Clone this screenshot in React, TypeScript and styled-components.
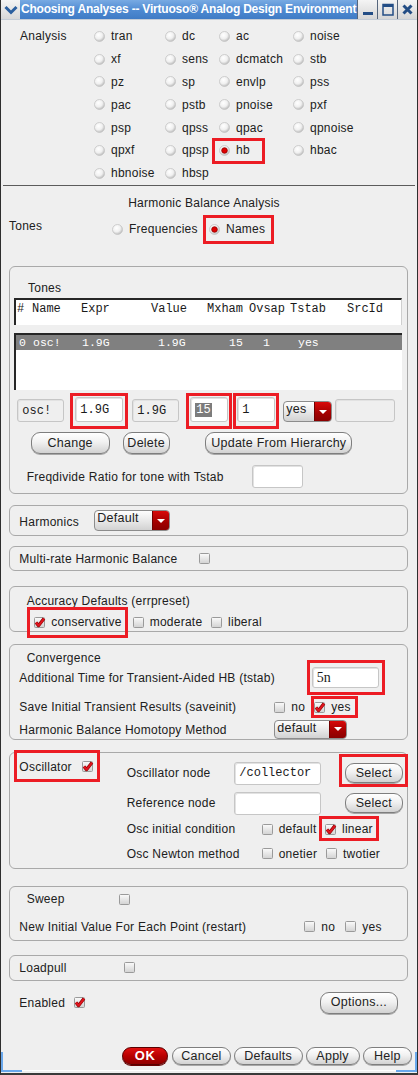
import React from "react";
import styled, { createGlobalStyle } from "styled-components";

const GlobalStyle = createGlobalStyle`
  html, body { margin: 0; padding: 0; background: #efefef; }
  body {
    font-family: "Liberation Sans", Arial, Helvetica, sans-serif;
    font-size: 12px;
    letter-spacing: 0.25px;
    color: #202020;
  }
  #root { width: 418px; height: 1075px; }
`;

const Window = styled.div`
  position: relative;
  width: 418px;
  height: 1075px;
  box-sizing: border-box;
  display: flex;
  flex-direction: column;
  background: #efefef;
  border-left: 1px solid #2e2e2e;
  border-right: 1px solid #2e2e2e;
  border-bottom: 2px solid #3a3a3a;
  overflow: hidden;
`;

/* ---------- title bar ---------- */
const TitleBar = styled.div`
  display: flex;
  height: 19px;
  flex-shrink: 0;
  border-bottom: 1px solid #c4ccd6;
`;
const MenuCell = styled.div`
  width: 19px;
  display: flex;
  align-items: center;
  justify-content: center;
  background: linear-gradient(#f4f4f4, #d8d8d8);
`;
const TitleText = styled.div`
  flex: 1;
  min-width: 0;
  overflow: hidden;
  white-space: nowrap;
  background: linear-gradient(#78aae3, #4d89d1 55%, #3f7bc5);
  color: #fff;
  font-weight: bold;
  font-size: 12px;
  letter-spacing: -0.2px;
  line-height: 19px;
  padding-left: 1px;
`;
const WinButton = styled.div`
  width: 19px;
  display: flex;
  align-items: center;
  justify-content: center;
  background: linear-gradient(#f4f4f4, #d6d6d6);
  border-left: 1px solid #56667c;
`;

/* ---------- analysis grid ---------- */
const AnalysisSection = styled.div`
  display: flex;
  padding: 5px 0 0 19px;
  height: 160px;
  flex-shrink: 0;
`;
const AnalysisLabel = styled.div`
  width: 74px;
  height: 22.8px;
  display: flex;
  align-items: center;
`;
const AnalysisGrid = styled.div`
  display: grid;
  grid-template-columns: 71px 54px 74px 1fr;
  grid-auto-rows: 22.8px;
`;
const GridCell = styled.div`
  display: flex;
  align-items: center;
`;
const Separator = styled.div`
  height: 1px;
  margin: 0 2px;
  background: #5c5c5c;
  flex-shrink: 0;
`;

const HBTitle = styled.div`
  margin-top: 9px;
  line-height: 16px;
  text-align: center;
  padding-right: 10px;
`;
const ToneRow = styled.div`
  display: flex;
  align-items: flex-start;
  margin-top: 7px;
  padding-left: 8px;
  height: 19px;
`;
const ToneLabel = styled.div`
  width: 103px;
  line-height: 16px;
`;
const ToneRadios = styled.div`
  display: flex;
  margin-top: 3px;
`;

/* ---------- generic ---------- */
const RadioWrap = styled.span<{ $w?: number }>`
  display: inline-flex;
  align-items: center;
  gap: 6px;
  height: 16px;
  line-height: 16px;
  white-space: nowrap;
  flex-shrink: 0;
  ${(p) => (p.$w ? `width: ${p.$w}px;` : "")}
`;

const OptionWrap = styled.span<{ $w?: number }>`
  display: inline-flex;
  align-items: center;
  gap: 6px;
  height: 16px;
  line-height: 16px;
  white-space: nowrap;
  flex-shrink: 0;
  ${(p) => (p.$w ? `width: ${p.$w}px;` : "")}
`;

const Highlight = styled.span<{ $t: number; $r: number; $b: number; $l: number }>`
  display: inline-flex;
  align-items: center;
  flex-shrink: 0;
  padding: ${(p) => `${p.$t}px ${p.$r}px ${p.$b}px ${p.$l}px`};
  margin: ${(p) => `-${p.$t}px -${p.$r}px -${p.$b}px -${p.$l}px`};
  outline: 3px solid #ec1c24;
`;

const Group = styled.div<{ $mt: number; $pb?: number }>`
  margin: ${(p) => p.$mt}px 9px 0 8px;
  border: 1px solid #a9a9a9;
  border-radius: 6px;
  display: flex;
  flex-direction: column;
  flex-shrink: 0;
  padding-bottom: ${(p) => p.$pb ?? 0}px;
`;
const GroupTitle = styled.div<{ $mt: number; $ml: number }>`
  margin: ${(p) => p.$mt}px 0 0 ${(p) => p.$ml}px;
  line-height: 16px;
`;
const Row = styled.div<{ $h: number; $mt?: number; $pl?: number; $align?: string }>`
  display: flex;
  align-items: ${(p) => p.$align ?? "center"};
  height: ${(p) => p.$h}px;
  margin-top: ${(p) => p.$mt ?? 0}px;
  padding-left: ${(p) => p.$pl ?? 0}px;
  flex-shrink: 0;
`;
const Label = styled.span<{ $w?: number; $dy?: number }>`
  ${(p) => (p.$w ? `width: ${p.$w}px;` : "")}
  flex-shrink: 0;
  white-space: nowrap;
  line-height: 16px;
  position: relative;
  top: ${(p) => p.$dy ?? 0}px;
`;

const Field = styled.div<{ $w: number; $h: number; $ml?: number; $disabled?: boolean; $serif?: boolean }>`
  width: ${(p) => p.$w}px;
  height: ${(p) => p.$h}px;
  margin-left: ${(p) => p.$ml ?? 0}px;
  box-sizing: border-box;
  flex-shrink: 0;
  background: ${(p) => (p.$disabled ? "#efefef" : "#ffffff")};
  border: 1px solid #c6c6c6;
  border-radius: 3px;
  box-shadow: inset 1px 1px 0 #e2e2e2;
  display: flex;
  align-items: center;
  padding-left: 4px;
  font-family: ${(p) => (p.$serif ? '"Liberation Serif", serif' : '"Liberation Mono", "DejaVu Sans Mono", monospace')};
  font-size: ${(p) => (p.$serif ? 14 : 12)}px;
  letter-spacing: 0;
  color: #1a1a1a;
`;
const Selected = styled.span`
  background: #7c7c7c;
  color: #fff;
  padding: 0 1px;
`;

const Dropdown = styled.div<{ $w: number; $h: number; $ml?: number }>`
  display: flex;
  width: ${(p) => p.$w}px;
  height: ${(p) => p.$h}px;
  margin-left: ${(p) => p.$ml ?? 0}px;
  box-sizing: border-box;
  flex-shrink: 0;
  border: 1px solid #8c8c8c;
  border-radius: 4px;
  overflow: hidden;
  background: linear-gradient(#fefefe, #e9e9e9 50%, #d2d2d2);
`;
const DropText = styled.span`
  flex: 1;
  padding: 0 0 0 2px;
  line-height: 15px;
  font-size: 12.5px;
`;
const DropArrow = styled.span`
  width: 16px;
  display: flex;
  align-items: center;
  justify-content: center;
  background: linear-gradient(#d80a0a, #a20000 60%, #8a0000);
  border-left: 1px solid #700000;
  &::after {
    content: "";
    border-left: 4px solid transparent;
    border-right: 4px solid transparent;
    border-top: 4px solid #ffffff;
  }
`;

const Button = styled.button<{ $w: number; $h: number; $ml?: number; $primary?: boolean }>`
  width: ${(p) => p.$w}px;
  height: ${(p) => p.$h}px;
  margin: 0 0 0 ${(p) => p.$ml ?? 0}px;
  padding: 0;
  flex-shrink: 0;
  box-sizing: border-box;
  border: 1px solid ${(p) => (p.$primary ? "#5a0000" : "#7e7e7e")};
  border-radius: 9px;
  background: ${(p) =>
    p.$primary
      ? "linear-gradient(#e01010, #b80000 50%, #900000)"
      : "linear-gradient(#ffffff, #f1f1f1 45%, #d2d2d2)"};
  box-shadow: 0 1px 0 ${(p) => (p.$primary ? "#6a0000" : "#a8a8a8")};
  color: ${(p) => (p.$primary ? "#ffffff" : "#222222")};
  font-family: "Liberation Sans", Arial, sans-serif;
  font-size: ${(p) => (p.$primary ? 13 : 12.5)}px;
  font-weight: ${(p) => (p.$primary ? "bold" : "normal")};
  letter-spacing: ${(p) => (p.$primary ? 0.5 : 0.25)}px;
  line-height: 1;
`;

/* ---------- tones table ---------- */
const TableHead = styled.div`
  margin-top: 2px;
  height: 27px;
  box-sizing: border-box;
  background: #fff;
  border-top: 2px solid #262626;
  border-left: 2px solid #262626;
  border-right: 1px solid #cfcfcf;
  display: flex;
  padding: 2px 0 0 1px;
  font-family: "Liberation Mono", "DejaVu Sans Mono", monospace;
  font-size: 12px;
  letter-spacing: 0;
  line-height: 14px;
  color: #1a1a1a;
`;
const ListBox = styled.div`
  margin-top: 8px;
  height: 57px;
  box-sizing: border-box;
  background: #fff;
  border-top: 2px solid #262626;
  border-left: 2px solid #262626;
  padding-top: 0;
`;
const SelRow = styled.div`
  height: 15px;
  background: #808080;
  color: #fff;
  display: flex;
  padding-left: 3px;
  font-family: "Liberation Mono", "DejaVu Sans Mono", monospace;
  font-size: 11.5px;
  letter-spacing: 0;
  line-height: 15px;
`;
const Cell = styled.span<{ $w?: number }>`
  display: inline-block;
  white-space: pre;
  ${(p) => (p.$w ? `width: ${p.$w}px;` : "")}
  flex-shrink: 0;
`;

const Footer = styled.div`
  margin-top: auto;
  display: flex;
  justify-content: flex-end;
  gap: 3px;
  padding: 0 5px 5px 0;
`;
const FrameLine = styled.div`
  height: 2px;
  border-top: 1px solid #ffffff;
`;
const Corner = styled.span<{ $side: "left" | "right" }>`
  position: absolute;
  bottom: 1px;
  ${(p) => p.$side}: 0;
  width: 21px;
  height: 20px;
  box-sizing: border-box;
  border-bottom: 2px solid #6aa8ec;
  ${(p) => (p.$side === "left" ? "border-left" : "border-right")}: 2px solid #6aa8ec;
`;

/* ---------- drawings ---------- */
function Radio({ on }: { on?: boolean }) {
  return (
    <svg width="11" height="11" viewBox="0 0 11 11" style={{ flexShrink: 0 }}>
      <defs>
        <radialGradient id="rg" cx="0.4" cy="0.35" r="0.7">
          <stop offset="0" stopColor="#ffffff" />
          <stop offset="0.55" stopColor="#f0f0f0" />
          <stop offset="1" stopColor="#b4b4b4" />
        </radialGradient>
      </defs>
      <circle cx="5.5" cy="5.5" r="5" fill="url(#rg)" stroke="#c4c4c4" strokeWidth="0.8" />
      {on && <circle cx="5.5" cy="5.5" r="2.8" fill="#e00000" stroke="#8c0000" strokeWidth="0.8" />}
    </svg>
  );
}

function Check({ on }: { on?: boolean }) {
  return (
    <svg width="11" height="11" viewBox="0 0 11 11" style={{ flexShrink: 0, overflow: "visible" }}>
      <defs>
        <linearGradient id="cg" x1="0" y1="0" x2="0" y2="1">
          <stop offset="0" stopColor="#fbfbfb" />
          <stop offset="1" stopColor="#d2d2d2" />
        </linearGradient>
      </defs>
      <rect x="0.5" y="0.5" width="10" height="10" rx="1" fill="url(#cg)" stroke="#9a9a9a" />
      {on && (
        <>
          <path d="M2 5.5 L4.6 8.6 L10 1.6" fill="none" stroke="#8a0000" strokeWidth="3.2" strokeLinejoin="round" />
          <path d="M2 5.5 L4.6 8.6 L10 1.6" fill="none" stroke="#e0141e" strokeWidth="2" strokeLinejoin="round" />
        </>
      )}
    </svg>
  );
}

function RadioItem({ label, on, w }: { label: string; on?: boolean; w?: number }) {
  return (
    <RadioWrap $w={w}>
      <Radio on={on} />
      {label}
    </RadioWrap>
  );
}

function Opt({ label, on, w }: { label?: string; on?: boolean; w?: number }) {
  return (
    <OptionWrap $w={w}>
      <Check on={on} />
      {label}
    </OptionWrap>
  );
}

const analyses = [
  "tran", "dc", "ac", "noise",
  "xf", "sens", "dcmatch", "stb",
  "pz", "sp", "envlp", "pss",
  "pac", "pstb", "pnoise", "pxf",
  "psp", "qpss", "qpac", "qpnoise",
  "qpxf", "qpsp", "hb", "hbac",
  "hbnoise", "hbsp",
];

const headCols: [string, number][] = [
  ["#", 15], ["Name", 49], ["Expr", 70], ["Value", 56], ["Mxham", 42], ["Ovsap", 41], ["Tstab", 57], ["SrcId", 0],
];
const rowCols: [string, number][] = [
  ["0", 14], ["osc!", 49], ["1.9G", 76], ["1.9G", 71], ["15", 34], ["1", 35], ["yes", 0],
];

export default function App() {
  return (
    <>
      <GlobalStyle />
      <Window>
        <TitleBar>
          <MenuCell>
            <svg width="14" height="10" viewBox="0 0 14 10">
              <path d="M1.5 2 L7 7.5 L12.5 2" fill="none" stroke="#2b5f9f" strokeWidth="3" />
            </svg>
          </MenuCell>
          <TitleText>Choosing Analyses -- Virtuoso® Analog Design Environment</TitleText>
          <WinButton>
            <svg width="12" height="12" viewBox="0 0 12 12">
              <rect x="1" y="8" width="10" height="3" fill="#234d85" />
            </svg>
          </WinButton>
          <WinButton>
            <svg width="12" height="13" viewBox="0 0 12 13">
              <rect x="1" y="1.5" width="10" height="10.5" fill="none" stroke="#234d85" strokeWidth="1.5" />
              <rect x="1" y="1" width="10" height="3" fill="#234d85" />
            </svg>
          </WinButton>
          <WinButton>
            <svg width="11" height="11" viewBox="0 0 11 11">
              <path d="M1.5 1.5 L9.5 9.5 M9.5 1.5 L1.5 9.5" stroke="#234d85" strokeWidth="3" />
            </svg>
          </WinButton>
        </TitleBar>

        <AnalysisSection>
          <AnalysisLabel>Analysis</AnalysisLabel>
          <AnalysisGrid>
            {analyses.map((a) => (
              <GridCell key={a}>
                {a === "hb" ? (
                  <Highlight $t={1.4} $r={12.2} $b={2.6} $l={3.7}>
                    <RadioItem label={a} on />
                  </Highlight>
                ) : (
                  <RadioItem label={a} />
                )}
              </GridCell>
            ))}
          </AnalysisGrid>
        </AnalysisSection>
        <Separator />

        <HBTitle>Harmonic Balance Analysis</HBTitle>
        <ToneRow>
          <ToneLabel>Tones</ToneLabel>
          <ToneRadios>
            <RadioItem label="Frequencies" w={97} />
            <Highlight $t={2.7} $r={6} $b={4} $l={3.3}>
              <RadioItem label="Names" on />
            </Highlight>
          </ToneRadios>
        </ToneRow>

        {/* Tones group */}
        <Group $mt={29} $pb={5} style={{ paddingLeft: 4, paddingRight: 5 }}>
          <GroupTitle $mt={13} $ml={14}>Tones</GroupTitle>
          <TableHead>
            {headCols.map(([t, w]) => (
              <Cell key={t} $w={w || undefined}>{t}</Cell>
            ))}
          </TableHead>
          <ListBox>
            <SelRow>
              {rowCols.map(([t, w], i) => (
                <Cell key={i} $w={w || undefined}>{t}</Cell>
              ))}
            </SelRow>
          </ListBox>
          <Row $h={25} $mt={7} $align="flex-end">
            <Field $w={47} $h={23} $ml={3.3} $disabled>osc!</Field>
            <Highlight $t={1.4} $r={2} $b={4.3} $l={2.7} style={{ marginLeft: 11 - 2.7 }}>
              <Field $w={48} $h={25}>1.9G</Field>
            </Highlight>
            <Field $w={47} $h={23} $ml={9} $disabled>1.9G</Field>
            <Highlight $t={1.4} $r={0.5} $b={4.3} $l={1.7} style={{ marginLeft: 11 - 1.7 }}>
              <Field $w={38} $h={25}>
                <Selected>15</Selected>
              </Field>
            </Highlight>
            <Highlight $t={1.4} $r={1} $b={4.3} $l={1.4} style={{ marginLeft: 9 - 1.4 }}>
              <Field $w={38} $h={25}>1</Field>
            </Highlight>
            <Dropdown $w={49} $h={21} $ml={8}>
              <DropText>yes</DropText>
              <DropArrow />
            </Dropdown>
            <Field $w={60} $h={23} $ml={3} $disabled />
          </Row>
          <Row $h={22} $mt={10}>
            <Button $w={79} $h={22} $ml={16.7}>Change</Button>
            <Button $w={47} $h={22} $ml={13}>Delete</Button>
            <Button $w={147} $h={22} $ml={35.6}>Update From Hierarchy</Button>
          </Row>
          <Row $h={23} $mt={11.3} $pl={12.7}>
            <Label $w={225.6}>Freqdivide Ratio for tone with Tstab</Label>
            <Field $w={51} $h={23} />
          </Row>
        </Group>

        {/* Harmonics */}
        <Group $mt={11}>
          <Row $h={29} $pl={9.3}>
            <Label $w={75} $dy={1.5}>Harmonics</Label>
            <Dropdown $w={76} $h={21}>
              <DropText>Default</DropText>
              <DropArrow />
            </Dropdown>
          </Row>
        </Group>

        {/* Multi-rate */}
        <Group $mt={9.7}>
          <Row $h={23.3} $pl={9.3}>
            <Label $w={180}>Multi-rate Harmonic Balance</Label>
            <Check />
          </Row>
        </Group>

        {/* Accuracy */}
        <Group $mt={14.7} $pb={1}>
          <GroupTitle $mt={5.6} $ml={16.7}>Accuracy Defaults (errpreset)</GroupTitle>
          <Row $h={16} $mt={5.7} $pl={24.3}>
            <Highlight $t={4.3} $r={3} $b={4.7} $l={4}>
              <Opt label="conservative" on />
            </Highlight>
            <span style={{ width: 99 - 88, flexShrink: 0 }} />
            <Opt label="moderate" w={78.4} />
            <Opt label="liberal" />
          </Row>
        </Group>

        {/* Convergence */}
        <Group $mt={11.7}>
          <GroupTitle $mt={5} $ml={16.7}>Convergence</GroupTitle>
          <Row $h={23} $mt={0.3} $pl={9.3}>
            <Label $w={292.4}>Additional Time for Transient-Aided HB (tstab)</Label>
            <Highlight $t={3.7} $r={3} $b={4} $l={1.4}>
              <Field $w={67.3} $h={21.3} $serif>
                5n
              </Field>
            </Highlight>
          </Row>
          <Row $h={16} $mt={10} $pl={9.3}>
            <Label $w={255}>Save Initial Transient Results (saveinit)</Label>
            <Opt label="no" w={40} />
            <Highlight $t={0} $r={4} $b={0} $l={0.4}>
              <Opt label="yes" on />
            </Highlight>
          </Row>
          <Row $h={19.4} $mt={4.3} $pl={9.3}>
            <Label $w={255} $dy={1}>Harmonic Balance Homotopy Method</Label>
            <Dropdown $w={72.4} $h={19.4}>
              <DropText>default</DropText>
              <DropArrow />
            </Dropdown>
          </Row>
        </Group>

        {/* Oscillator */}
        <Group $mt={11.7} $pb={6.3}>
          <Row $h={109} $align="flex-start">
            <Row $h={16} $mt={6} $pl={9.3} style={{ width: 107.4 }}>
              <Highlight $t={5.7} $r={4.3} $b={4} $l={2.3}>
                <Label $w={62.4}>Oscillator</Label>
                <Check on />
              </Highlight>
            </Row>
            <div>
              <Row $h={23} $mt={9}>
                <Label $w={107.6}>Oscillator node</Label>
                <Field $w={86.4} $h={23}>/collector</Field>
                <Highlight $t={5.4} $r={2} $b={0.4} $l={2.7} style={{ marginLeft: 24.3 - 2.7 }}>
                  <Button $w={57.7} $h={20.6}>Select</Button>
                </Highlight>
              </Row>
              <Row $h={23} $mt={7}>
                <Label $w={107.6}>Reference node</Label>
                <Field $w={86.4} $h={23} />
                <Button $w={57.7} $h={20.6} $ml={24.3}>Select</Button>
              </Row>
              <Row $h={16} $mt={6.7}>
                <Label $w={135}>Osc initial condition</Label>
                <Opt label="default" w={63.3} />
                <Highlight $t={2.7} $r={3.5} $b={0.6} $l={2.7}>
                  <Opt label="linear" on />
                </Highlight>
              </Row>
              <Row $h={16} $mt={8.3}>
                <Label $w={135}>Osc Newton method</Label>
                <Opt label="onetier" w={64.3} />
                <Opt label="twotier" />
              </Row>
            </div>
          </Row>
        </Group>

        {/* Sweep */}
        <Group $mt={16.7} $pb={5.3}>
          <Row $h={16} $mt={4.7} $pl={16.7}>
            <Label $w={92.6}>Sweep</Label>
            <Check />
          </Row>
          <Row $h={16} $mt={11.3} $pl={9.3}>
            <Label $w={285}>New Initial Value For Each Point (restart)</Label>
            <Opt label="no" w={41} />
            <Opt label="yes" />
          </Row>
        </Group>

        {/* Loadpull */}
        <Group $mt={14.4}>
          <Row $h={23.3} $pl={9.3}>
            <Label $w={104.4}>Loadpull</Label>
            <Check />
          </Row>
        </Group>

        <Row $h={22.3} $mt={11} $pl={18.3}>
          <Label $w={54.7}>Enabled</Label>
          <Check on />
          <Button $w={77.7} $h={22.3} style={{ marginLeft: "auto", marginRight: 19.3 }}>
            Options...
          </Button>
        </Row>

        <Footer>
          <Button $w={46.3} $h={18.3} $primary style={{ marginRight: 1 }}>OK</Button>
          <Button $w={58.4} $h={18.3}>Cancel</Button>
          <Button $w={69} $h={18.3}>Defaults</Button>
          <Button $w={54} $h={18.3}>Apply</Button>
          <Button $w={49.4} $h={18.3}>Help</Button>
        </Footer>
        <FrameLine />
        <Corner $side="left" />
        <Corner $side="right" />
      </Window>
    </>
  );
}
